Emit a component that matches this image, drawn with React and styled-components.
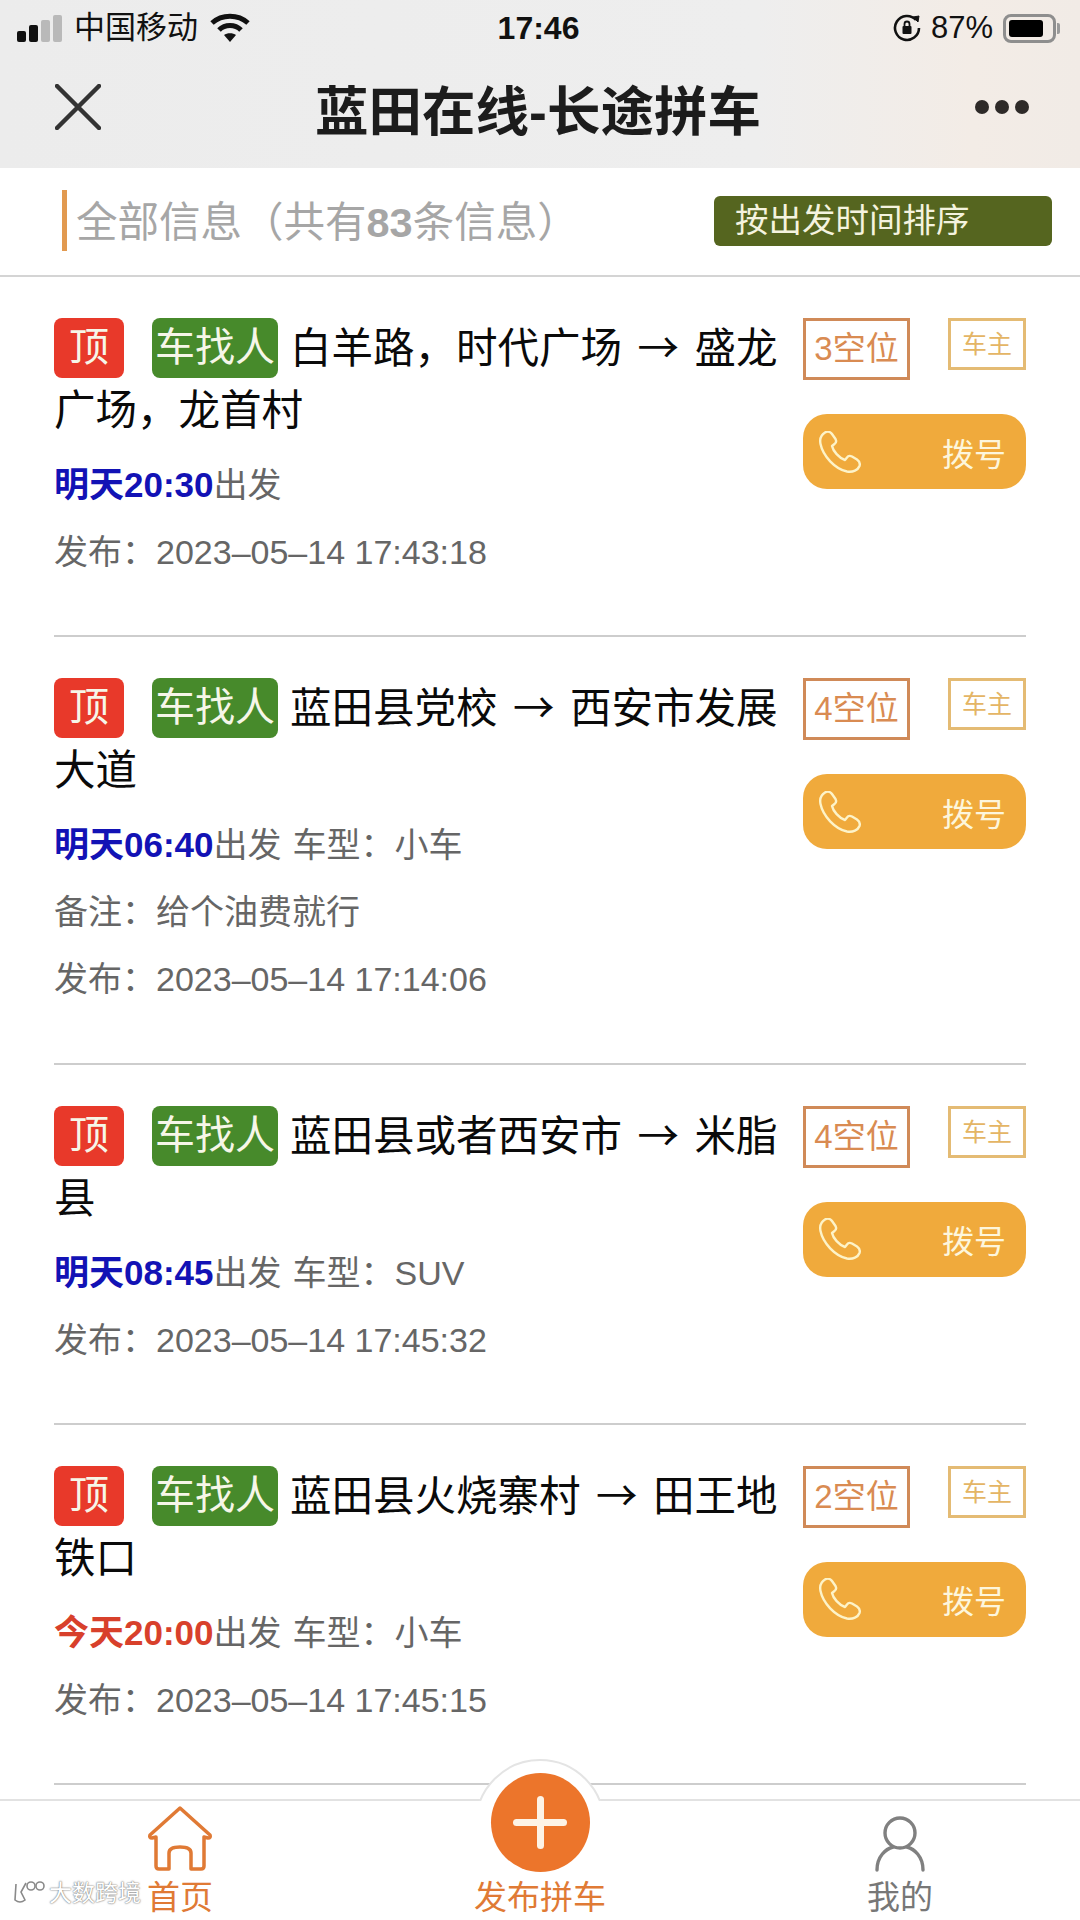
import styled, { createGlobalStyle } from 'styled-components'

const GlobalStyle = createGlobalStyle`
  html, body {
    margin: 0;
    padding: 0;
    background: #fff;
  }
  * {
    box-sizing: border-box;
  }
  body {
    font-family: "Liberation Sans", "Noto Sans CJK SC", sans-serif;
  }
`

const Page = styled.div`
  width: 1080px;
  height: 1920px;
  display: flex;
  flex-direction: column;
  overflow: hidden;
  position: relative;
`

const TopArea = styled.div`
  height: 168px;
  flex: none;
  background: linear-gradient(90deg, #ececec 0%, #eeeeee 70%, #f3ece6 90%, #f1ebe6 100%);
`

const StatusBar = styled.div`
  height: 54px;
  padding: 2px 20px 0 17px;
  display: grid;
  grid-template-columns: 1fr auto 1fr;
  align-items: center;
  color: #111;
`

const StatusGroup = styled.div`
  display: flex;
  align-items: center;
  gap: ${p => p.$gap || 12}px;
  justify-content: ${p => (p.$end ? 'flex-end' : 'flex-start')};
`

const StatusText = styled.span`
  font-size: 31px;
  line-height: 36px;
`

const Clock = styled.span`
  font-size: 32px;
  font-weight: 700;
  line-height: 36px;
`

const Signal = styled.div`
  display: flex;
  align-items: flex-end;
  gap: 3px;
  height: 27px;
`

const SignalBar = styled.i`
  display: block;
  width: 9px;
  height: ${p => p.$h}px;
  border-radius: 2px;
  background: ${p => (p.$on ? '#111' : '#b9b9b9')};
`

const Battery = styled.div`
  width: 53px;
  height: 29px;
  border: 3px solid #8e8e8e;
  border-radius: 8px;
  padding: 3px;
  position: relative;
  margin-right: 4px;

  &::before {
    content: '';
    display: block;
    width: 83%;
    height: 100%;
    background: #000;
    border-radius: 3px;
  }
  &::after {
    content: '';
    position: absolute;
    right: -7px;
    top: 6px;
    width: 3px;
    height: 11px;
    background: #9a9a9a;
    border-radius: 0 2px 2px 0;
  }
`

const NavBar = styled.div`
  height: 114px;
  padding: 0 51px 8px 55px;
  display: grid;
  grid-template-columns: 92px 1fr 100px;
  align-items: center;
`

const NavTitle = styled.div`
  font-size: 53.5px;
  font-weight: 600;
  text-align: center;
  color: #1c1c1c;
  white-space: nowrap;
`

const Dots = styled.div`
  display: flex;
  justify-content: flex-end;
  gap: 6px;

  i {
    width: 14px;
    height: 14px;
    border-radius: 50%;
    background: #2e2a28;
  }
`

const InfoHead = styled.div`
  height: 109px;
  flex: none;
  padding: 0 28px 2px 62px;
  display: flex;
  align-items: center;
  justify-content: space-between;
  border-bottom: 2px solid #d4d4d4;
`

const InfoTitle = styled.div`
  height: 61px;
  padding-left: 9px;
  border-left: 5px solid #e29a50;
  font-size: 41.5px;
  line-height: 66px;
  color: #a6a6a6;
  white-space: nowrap;

  b {
    font-weight: 700;
  }
`

const SortButton = styled.div`
  width: 338px;
  height: 50px;
  padding-left: 21px;
  border-radius: 6px;
  background: #55651f;
  color: #f4f3df;
  font-size: 33.5px;
  line-height: 49px;
`

const List = styled.div`
  flex: 1;
  min-height: 0;
  overflow: hidden;
`

const Card = styled.div`
  margin: 0 54px;
  padding: 41px 0 49.3px;
  display: flex;
  justify-content: space-between;
  border-bottom: 2px solid #cdcdcd;
`

const CardMain = styled.div`
  width: 726px;
`

const CardTitle = styled.div`
  font-size: 41.5px;
  line-height: 62px;
  color: #0a0a0a;
  margin-bottom: 9px;
`

const Arrow = styled.span`
  font-family: "Noto Sans CJK SC", sans-serif;
  line-height: 1;
  margin: 0 4px;
`

const Badge = styled.span`
  display: inline-block;
  height: 60px;
  width: ${p => (p.$wide ? 126 : 70)}px;
  margin-right: ${p => (p.$wide ? 12 : 28)}px;
  border-radius: 8px;
  background: ${p => (p.$wide ? '#478a2b' : '#e8392a')};
  color: #f6f6e8;
  font-size: 40px;
  line-height: 58px;
  text-align: center;
  vertical-align: top;
  white-space: nowrap;
`

const MetaLine = styled.div`
  font-size: 34px;
  line-height: 67px;
  color: #666;
  white-space: nowrap;
`

const When = styled.b`
  font-size: 35px;
  font-weight: 700;
  color: ${p => (p.$today ? '#d8402b' : '#1212b5')};
`

const CarType = styled.span`
  margin-left: 11px;
`

const CardSide = styled.div`
  width: 223px;
  flex: none;
`

const TagRow = styled.div`
  display: flex;
  justify-content: space-between;
  align-items: flex-start;
  margin-bottom: 34px;
`

const SeatTag = styled.div`
  width: 107px;
  height: 62px;
  border: 3px solid #d08a58;
  color: #d98b52;
  font-size: 33px;
  line-height: 55px;
  text-align: center;
`

const OwnerTag = styled.div`
  width: 78px;
  height: 52px;
  border: 3px solid #e4bb74;
  color: #e4b565;
  font-size: 25px;
  line-height: 46px;
  text-align: center;
`

const CallButton = styled.div`
  height: 75px;
  padding: 0 20px 0 16px;
  border-radius: 24px;
  background: #f0aa3c;
  color: #fdf6dc;
  display: flex;
  align-items: center;
  justify-content: space-between;
  font-size: 32px;
`

const TabBar = styled.div`
  height: 121px;
  flex: none;
  position: relative;
  z-index: 1;
  background: #fff;
  border-top: 2px solid #e2e2e2;
  display: grid;
  grid-template-columns: repeat(3, 1fr);
`

const TabItem = styled.div`
  display: flex;
  flex-direction: column;
  align-items: center;
  justify-content: flex-end;
  padding-bottom: 2px;
  color: ${p => (p.$active ? '#e07a35' : '#777')};
  font-size: 33px;
  line-height: 40px;

  svg {
    display: block;
    margin-bottom: 6px;
  }
`

const Bump = styled.div`
  position: absolute;
  left: 475px;
  top: -42px;
  width: 130px;
  height: 130px;
  border-radius: 50%;
  background: #fff;
  border: 2px solid #e4e4e4;
  clip-path: inset(0 0 88px 0);
`

const PublishButton = styled.div`
  position: absolute;
  left: 491px;
  top: -28px;
  width: 99px;
  height: 99px;
  border-radius: 50%;
  background: #ec752b;

  &::before,
  &::after {
    content: '';
    position: absolute;
    background: #fdf3e6;
    border-radius: 4px;
  }
  &::before {
    left: 22px;
    right: 23px;
    top: 46px;
    height: 7px;
  }
  &::after {
    top: 23px;
    bottom: 23px;
    left: 46px;
    width: 7px;
  }
`

const Watermark = styled.div`
  position: absolute;
  left: 12px;
  bottom: 14px;
  z-index: 2;
  display: flex;
  align-items: center;
  gap: 3px;
  color: #fff;
  font-size: 23px;
  line-height: 26px;
  text-shadow: 0 0 2px #777, 0 0 1px #777;
`

const rides = [
  {
    from: '白羊路，时代广场',
    to: '盛龙广场，龙首村',
    when: '明天20:30',
    seats: 3,
    posted: '2023–05–14 17:43:18',
  },
  {
    from: '蓝田县党校',
    to: '西安市发展大道',
    when: '明天06:40',
    car: '小车',
    note: '给个油费就行',
    seats: 4,
    posted: '2023–05–14 17:14:06',
  },
  {
    from: '蓝田县或者西安市',
    to: '米脂县',
    when: '明天08:45',
    car: 'SUV',
    seats: 4,
    posted: '2023–05–14 17:45:32',
  },
  {
    from: '蓝田县火烧寨村',
    to: '田王地铁口',
    when: '今天20:00',
    today: true,
    car: '小车',
    seats: 2,
    posted: '2023–05–14 17:45:15',
  },
]

function WifiIcon() {
  return (
    <svg width="40" height="30" viewBox="0 0 40 30" fill="none" stroke="#111" strokeWidth="5">
      <path d="M2 10 C12 1 28 1 38 10" />
      <path d="M9 17 C15 11 25 11 31 17" />
      <path d="M20 29 L14 22 C17 19.5 23 19.5 26 22 Z" fill="#111" stroke="none" />
    </svg>
  )
}

function RotationLockIcon() {
  return (
    <svg width="28" height="28" viewBox="0 0 28 28" fill="none" stroke="#111" strokeWidth="2.6">
      <path d="M23 6 A12 12 0 1 0 26 14" />
      <path d="M20 3 L25 8 L26 2 Z" fill="#111" strokeWidth="1" />
      <rect x="9.5" y="12" width="9" height="8" rx="1" fill="#111" stroke="none" />
      <path d="M11.5 12 V10 a2.5 2.5 0 0 1 5 0 V12" strokeWidth="1.8" />
    </svg>
  )
}

function CloseIcon() {
  return (
    <svg width="46" height="46" viewBox="0 0 46 46" stroke="#333" strokeWidth="4.5" strokeLinecap="round">
      <path d="M2 2 L44 44 M44 2 L2 44" />
    </svg>
  )
}

function PhoneIcon() {
  return (
    <svg width="42" height="42" viewBox="0 0 42 42" fill="none" stroke="#fdf3c8" strokeWidth="2.4" strokeLinejoin="round">
      <path d="M6 1.5 C2 4 0.5 8 1.5 13 C4 25 16 38 28 40.5 C34 41.5 39 39 40.5 35 C41.5 32 40 30 38 28.5 L33 25.5 C31 24.5 29 25 28 26.5 L26 29 C20 27 14 20 13 15 L15.5 13 C17 12 17.5 10 16.5 8 L13 3 C11.5 0.8 8.5 0 6 1.5 Z" />
    </svg>
  )
}

function HomeIcon() {
  return (
    <svg width="66" height="66" viewBox="0 0 66 66" fill="none" stroke="#e07a35" strokeWidth="3.5" strokeLinejoin="round">
      <path d="M33 2 L63 29 Q64 32 61 32 L57 31 V60 Q57 63 54 63 H44 V47 Q44 41 33 41 Q22 41 22 47 V63 H12 Q9 63 9 60 V31 L5 32 Q2 32 3 29 Z" />
    </svg>
  )
}

function UserIcon() {
  return (
    <svg width="52" height="56" viewBox="0 0 52 56" fill="none" stroke="#808080" strokeWidth="3.4" strokeLinecap="round">
      <ellipse cx="26" cy="17" rx="15" ry="15" />
      <path d="M3 54 C3 40 12 33 19 31 M49 54 C49 40 40 33 33 31" />
    </svg>
  )
}

function WatermarkLogo() {
  return (
    <svg width="34" height="26" viewBox="0 0 34 26" fill="none" stroke="#8a8a8a" strokeWidth="1.6">
      <path d="M4 4 L3 20 Q8 24 13 20 L9 12 L14 3" />
      <circle cx="19" cy="6" r="4" />
      <circle cx="28" cy="6" r="4" />
    </svg>
  )
}

function RideCard({ ride }) {
  return (
    <Card>
      <CardMain>
        <CardTitle>
          <Badge>顶</Badge>
          <Badge $wide>车找人</Badge>
          {ride.from} <Arrow>→</Arrow> {ride.to}
        </CardTitle>
        <MetaLine>
          <When $today={ride.today}>{ride.when}</When>出发
          {ride.car && <CarType>车型：{ride.car}</CarType>}
        </MetaLine>
        {ride.note && <MetaLine>备注：{ride.note}</MetaLine>}
        <MetaLine>发布：{ride.posted}</MetaLine>
      </CardMain>
      <CardSide>
        <TagRow>
          <SeatTag>{ride.seats}空位</SeatTag>
          <OwnerTag>车主</OwnerTag>
        </TagRow>
        <CallButton>
          <PhoneIcon />
          <span>拨号</span>
        </CallButton>
      </CardSide>
    </Card>
  )
}

export default function App() {
  return (
    <Page>
      <GlobalStyle />
      <TopArea>
        <StatusBar>
          <StatusGroup>
            <Signal>
              <SignalBar $on $h={11} />
              <SignalBar $on $h={17} />
              <SignalBar $h={22} />
              <SignalBar $h={27} />
            </Signal>
            <StatusText>中国移动</StatusText>
            <WifiIcon />
          </StatusGroup>
          <Clock>17:46</Clock>
          <StatusGroup $end $gap={10}>
            <RotationLockIcon />
            <StatusText>87%</StatusText>
            <Battery />
          </StatusGroup>
        </StatusBar>
        <NavBar>
          <CloseIcon />
          <NavTitle>蓝田在线-长途拼车</NavTitle>
          <Dots>
            <i />
            <i />
            <i />
          </Dots>
        </NavBar>
      </TopArea>
      <InfoHead>
        <InfoTitle>
          全部信息（共有<b>83</b>条信息）
        </InfoTitle>
        <SortButton>按出发时间排序</SortButton>
      </InfoHead>
      <List>
        {rides.map(ride => (
          <RideCard key={ride.posted} ride={ride} />
        ))}
      </List>
      <TabBar>
        <TabItem $active>
          <HomeIcon />
          首页
        </TabItem>
        <TabItem $active>发布拼车</TabItem>
        <TabItem>
          <UserIcon />
          我的
        </TabItem>
        <Bump />
        <PublishButton />
      </TabBar>
      <Watermark>
        <WatermarkLogo />
        大数跨境
      </Watermark>
    </Page>
  )
}
